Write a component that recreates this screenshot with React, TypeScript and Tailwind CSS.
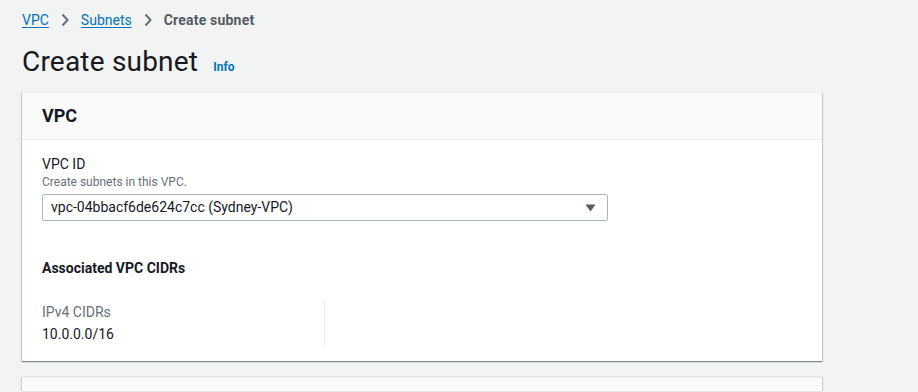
export default function App() {
  return (
    <div className="min-h-screen bg-[#f2f3f3] pl-[22px] pt-[10px] font-['Roboto',sans-serif] text-[#16191f]">
      {/* Breadcrumb */}
      <nav className="flex items-center h-[20px] text-[14px] leading-[20px]">
        <a className="text-[#0073bb] underline underline-offset-2">VPC</a>
        <Chevron />
        <a className="text-[#0073bb] underline underline-offset-2">Subnets</a>
        <Chevron />
        <span className="font-bold text-[#545b64] tracking-[0.2px]">Create subnet</span>
      </nav>

      {/* Title */}
      <div className="mt-[14px] flex items-baseline gap-[15px]">
        <h1 className="text-[28px] leading-[36px] font-normal tracking-[0.2px]">Create subnet</h1>
        <a className="text-[12px] font-bold text-[#0073bb]">Info</a>
      </div>

      {/* VPC card */}
      <div className="mt-[12px] w-[800px] bg-white border-t border-[#eaeded] shadow-[0_1px_1px_0_rgba(0,28,36,0.3),1px_1px_1px_0_rgba(0,28,36,0.15),-1px_1px_1px_0_rgba(0,28,36,0.15)]">
        <div className="bg-[#fafafa] border-b border-[#eaeded] px-5 py-3">
          <h2 className="text-[18px] leading-[22px] font-bold">VPC</h2>
        </div>
        <div className="px-5 pt-[14px] pb-[16px]">
          <div className="text-[14px] leading-[20px]">VPC ID</div>
          <div className="text-[12px] leading-[16px] text-[#687078]">Create subnets in this VPC.</div>
          <div className="mt-[4px] w-[566px] h-[27px] flex items-center justify-between border border-[#aab7b8] rounded-[2px] pl-[8px] pr-[11px] text-[14px]">
            <span>vpc-04bbacf6de624c7cc (Sydney-VPC)</span>
            <svg width="11" height="8" viewBox="0 0 11 8">
              <path d="M0.5 0.5h10L5.5 7.5z" fill="#545b64" />
            </svg>
          </div>

          <div className="mt-[37px] text-[14px] leading-[20px] font-bold">Associated VPC CIDRs</div>

          <div className="mt-[23px] grid grid-cols-[283px_283px]">
            <div className="border-r border-[#eaeded]">
              <div className="text-[14px] leading-[22px] text-[#687078]">IPv4 CIDRs</div>
              <div className="text-[14px] leading-[22px]">10.0.0.0/16</div>
            </div>
            <div />
          </div>
        </div>
      </div>

      {/* Next card (partially visible) */}
      <div className="mt-[16px] w-[800px] h-[14px] bg-[#fafafa] border-t border-[#eaeded] shadow-[1px_0_1px_0_rgba(0,28,36,0.15),-1px_0_1px_0_rgba(0,28,36,0.15)]" />
    </div>
  );
}

function Chevron() {
  return (
    <svg className="mx-[12px]" width="8" height="14" viewBox="0 0 8 14">
      <path d="M1.5 1.5l5 5.5-5 5.5" fill="none" stroke="#687078" strokeWidth="2" />
    </svg>
  );
}
